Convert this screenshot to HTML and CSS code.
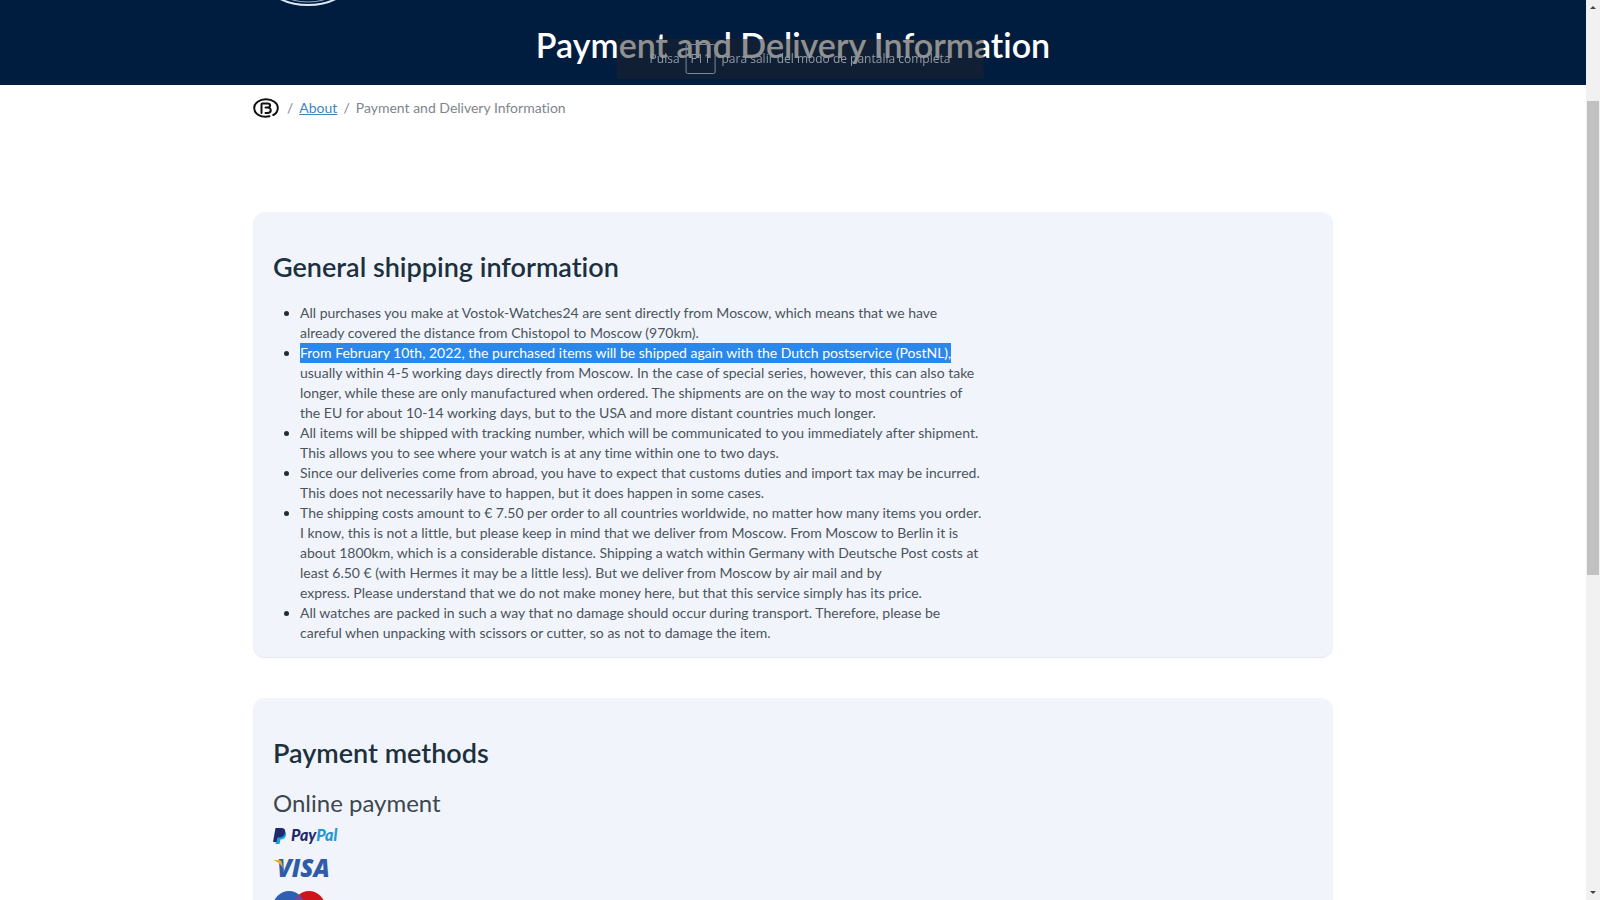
FILE: index.html
```html
<!DOCTYPE html>
<html lang="en">
<head>
    <meta charset="UTF-8">
    <meta name="viewport" content="width=device-width, initial-scale=1.0">
    <title>Payment and Delivery Information</title>
    <link rel="stylesheet" href="styles.css">
</head>
<body>
    <div class="page">
        <header class="header">
            <svg class="header-logo" width="80" height="8" viewBox="0 0 80 8" aria-hidden="true">
                <ellipse cx="38" cy="-22" rx="44" ry="27" fill="none" stroke="#dfe9f5" stroke-width="2"/>
                <ellipse cx="38" cy="-24" rx="40" ry="26" fill="none" stroke="#8fa9c4" stroke-width="1"/>
            </svg>
            <h1>Payment and Delivery Information</h1>
        </header>

        <main class="container">
            <nav class="breadcrumb" aria-label="Breadcrumb">
                <a class="home" href="#" aria-label="Home">
                    <svg width="26" height="20" viewBox="0 0 26 20" fill="none" stroke="#111" stroke-width="2" stroke-linecap="round" stroke-linejoin="round">
                        <path d="M16.5 18.3C8 20 1.2 16 1.2 10C1.2 4.8 6.5 1.3 13 1.3S24.8 5 24.8 9.8C24.8 13.2 23 15.7 20.300 17"/>
                        <path d="M8.5 15V6.500Q8.500 5.500 9.500 5.500H14.500C18 5.500 18 9.500 14.500 9.500H12.500M14.500 9.500C19 9.500 18.700 15 14.500 15H12.500"/>
                    </svg>
                </a>
                <span>/</span>
                <a href="#">About</a>
                <span>/</span>
                <span>Payment and Delivery Information</span>
            </nav>

            <section class="card">
                <h2>General shipping information</h2>
                <ul class="info">
                    <li>All purchases you make at Vostok-Watches24 are sent directly from Moscow, which means that we have<br>
                        already covered the distance from Chistopol to Moscow (970km).</li>
                    <li><mark>From February 10th, 2022, the purchased items will be shipped again with the Dutch postservice (PostNL),</mark><br>
                        usually within 4-5 working days directly from Moscow. In the case of special series, however, this can also take<br>
                        longer, while these are only manufactured when ordered. The shipments are on the way to most countries of<br>
                        the EU for about 10-14 working days, but to the USA and more distant countries much longer.</li>
                    <li>All items will be shipped with tracking number, which will be communicated to you immediately after shipment.<br>
                        This allows you to see where your watch is at any time within one to two days.</li>
                    <li>Since our deliveries come from abroad, you have to expect that customs duties and import tax may be incurred.<br>
                        This does not necessarily have to happen, but it does happen in some cases.</li>
                    <li>The shipping costs amount to € 7.50 per order to all countries worldwide, no matter how many items you order.<br>
                        I know, this is not a little, but please keep in mind that we deliver from Moscow. From Moscow to Berlin it is<br>
                        about 1800km, which is a considerable distance. Shipping a watch within Germany with Deutsche Post costs at<br>
                        least 6.50 € (with Hermes it may be a little less). But we deliver from Moscow by air mail and by<br>
                        express. Please understand that we do not make money here, but that this service simply has its price.</li>
                    <li>All watches are packed in such a way that no damage should occur during transport. Therefore, please be<br>
                        careful when unpacking with scissors or cutter, so as not to damage the item.</li>
                </ul>
            </section>

            <section class="card">
                <h2>Payment methods</h2>
                <h3>Online payment</h3>
                <div class="methods">
                    <svg width="68" height="18" viewBox="0 0 68 18">
                        <path d="M4 4H11Q14 5 12.800 9Q11.500 12.500 7.500 12.500L6.500 17H2.500Z" fill="#1aa0dc"/>
                        <path d="M2.500 1H9Q13 1.500 12 6Q10.800 10.500 6 10.500H4.500L3.500 15H0Z" fill="#22286b"/>
                        <text class="paypal" x="18" y="14" fill="#22286b">Pay<tspan fill="#2795d3">Pal</tspan></text>
                    </svg>
                    <svg width="60" height="18" viewBox="0 0 60 18">
                        <text class="visa" x="4" y="18" fill="#2f5ba8">VISA</text>
                        <path d="M0 1H6Q8.500 1 9 4L10 9Q7 3.500 0 1Z" fill="#e8ab3a"/>
                    </svg>
                    <svg width="52" height="32" viewBox="0 0 52 32">
                        <circle cx="16" cy="16" r="16" fill="#2f5fb3"/>
                        <circle cx="36" cy="16" r="16" fill="#d0141c"/>
                        <path d="M26 3.500A16 16 0 0 1 26 28.500A16 16 0 0 1 26 3.500Z" fill="#6b4a9e"/>
                    </svg>
                </div>
            </section>
        </main>
    </div>

    <div class="scrollbar" aria-hidden="true">
        <svg width="8" height="16" viewBox="0 0 8 16"><path d="M1 9L4 6L7 9Z" fill="#444"/></svg>
        <div class="track"><div class="thumb"></div></div>
        <svg width="8" height="16" viewBox="0 0 8 16"><path d="M1 7L4 10L7 7Z" fill="#444"/></svg>
    </div>

    <div class="toast">Pulsa <kbd>F11</kbd> para salir del modo de pantalla completa</div>
</body>
</html>
```
FILE: styles.css
```css
* {
    box-sizing: border-box;
}
body {
    margin: 0;
    height: 100vh;
    overflow: hidden;
    display: grid;
    grid-template-columns: 1fr 14px;
    font-family: "Lato", sans-serif;
    font-size: 14px;
    line-height: 20px;
    font-variant-ligatures: none;
    color: #4b545c;
    background-color: #fff;
}
h1, h2, h3 {
    margin: 0;
}
.page {
    height: 100vh;
    overflow: hidden;
}
.header {
    position: relative;
    padding: 24px 0 19px;
    background-color: #001d40;
    color: #fff;
    text-align: center;
}
.header-logo {
    position: absolute;
    top: 0;
    left: 17%;
}
h1 {
    font-size: 34px;
    line-height: 42px;
    font-weight: 600;
}
.container {
    max-width: 1080px;
    margin: 0 auto;
}
.breadcrumb {
    display: flex;
    align-items: center;
    gap: 6px;
    margin: 13px 0 94px;
    color: #7e868c;
}
.breadcrumb svg {
    display: block;
}
.breadcrumb a {
    color: #3a87bd;
}
.breadcrumb .home {
    margin-right: 2px;
}
.card {
    padding: 38px 20px 14px;
    margin-bottom: 41px;
    border-radius: 12px;
    background-color: #f1f5fb;
    box-shadow: 0 1px 1px #e4e8ec;
}
h2 {
    font-size: 27px;
    line-height: 34px;
    font-weight: 600;
    color: #1c3040;
}
h3 {
    margin-top: 18px;
    font-size: 24px;
    line-height: 30px;
    font-weight: 400;
    color: #3c484f;
}
.info {
    margin: 19px 0 0;
    padding-left: 27px;
    white-space: nowrap;
}
.info li::marker {
    color: #222c35;
}
mark {
    display: inline-block;
    vertical-align: top;
    background-color: #2988e9;
    color: #fff;
}
.methods {
    display: flex;
    flex-direction: column;
    gap: 14px;
    margin-top: 9px;
}
.methods svg {
    overflow: visible;
}
.paypal {
    font: italic 900 16px "Lato", sans-serif;
}
.visa {
    font: italic 800 24px "Open Sans", sans-serif;
}
.scrollbar {
    display: flex;
    flex-direction: column;
    align-items: center;
    background-color: #f1f1f1;
}
.track {
    flex: 1;
    width: 100%;
    padding: 0 1px;
}
.thumb {
    height: 54.6%;
    margin-top: 85px;
    background-color: #c1c1c1;
}
/* fullscreen hint, fading out over the title */
.toast {
    position: fixed;
    top: 39px;
    left: 50%;
    transform: translateX(-50%);
    display: flex;
    align-items: center;
    gap: 6px;
    padding: 5px 33px;
    background-color: rgba(32, 34, 38, 0.5);
    color: #929ba6;
    font-family: "Open Sans", sans-serif;
    font-size: 12px;
    white-space: nowrap;
}
kbd {
    padding: 4px;
    border: 1px solid #7d8896;
    border-radius: 2px;
    font: inherit;
}
```
